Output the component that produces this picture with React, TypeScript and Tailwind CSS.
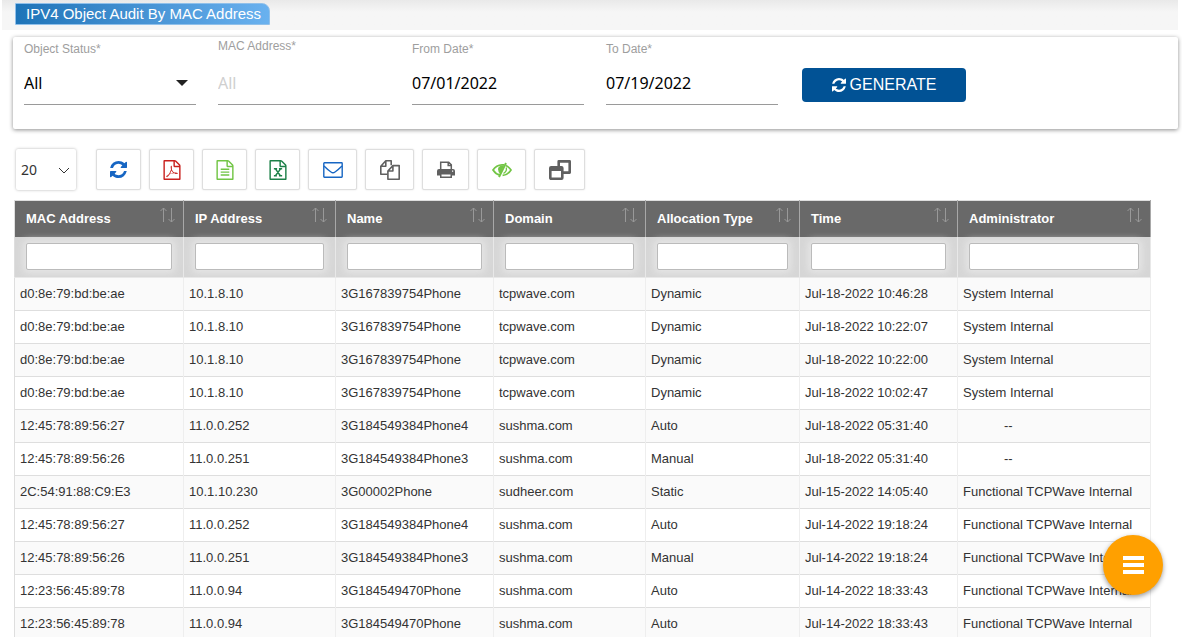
import React from "react";

const refreshPath =
  "M1511 1056q0 5-1 7-64 268-268 434.5t-478 166.5q-146 0-282.5-55t-243.5-157l-129 129q-19 19-45 19t-45-19-19-45v-448q0-26 19-45t45-19h448q26 0 45 19t19 45-19 45l-137 137q71 66 161 102t187 36q134 0 250-65t186-179q11-17 53-117 8-23 30-23h192q13 0 22.5 9.5t9.5 22.5zm25-800v448q0 26-19 45t-45 19h-448q-26 0-45-19t-19-45 19-45l138-138q-148-137-349-137-134 0-250 65t-186 179q-11 17-53 117-8 23-30 23h-199q-13 0-22.5-9.5t-9.5-22.5v-7q65-268 270-434.5t480-166.5q146 0 284 55.5t245 156.5l130-129q19-19 45-19t45 19 19 45z";
const filePath =
  "M1468 380q28 28 48 76t20 88v1152q0 40-28 68t-68 28h-1344q-40 0-68-28t-28-68v-1600q0-40 28-68t68-28h896q40 0 88 20t76 48zm-444-244v376h376q-10-29-22-41l-313-313q-12-12-41-22zm384 1528v-1024h-416q-40 0-68-28t-28-68v-416h-768v1536h1280z";
const pdfPath =
  "m-514-593q33 26 84 56 59-7 117-7 147 0 177 49 16 22 2 52 0 1-1 2l-2 2v1q-6 38-71 38-48 0-115-20t-130-53q-221 24-392 83-153 262-242 262-15 0-28-7l-24-12q-1-1-6-5-10-10-6-36 9-40 56-91.5t132-96.5q14-9 23 6 2 2 2 4 52-85 107-197 68-136 104-262-24-82-30.5-159.5t6.5-127.5q11-40 42-40h22q23 0 35 15 18 21 9 68-2 6-4 8 1 3 1 8v30q-2 123-14 192 55 164 146 238zm-576 411q52-24 137-158-51 40-87.5 84t-49.5 74zm398-920q-15 42-2 132 1-7 7-44 0-3 7-43 1-4 4-8-1-1-1-2t-1-2q-1-22-13-36 0 1-1 2v2zm-124 661q135-54 284-81-2-1-13-9.5t-16-13.5q-76-67-127-176-27 86-83 197-30 56-45 83zm646-16q-24-24-140-24 76 28 124 28 14 0 18-1 0-1-2-3z";

const Refresh = ({ className }: { className: string }) => (
  <svg viewBox="0 128 1536 1536" className={className} fill="currentColor" aria-hidden="true">
    <path d={refreshPath} />
  </svg>
);

const FileIcon = ({ extra, children }: { extra?: string; children?: React.ReactNode }) => (
  <svg viewBox="0 0 1536 1792" className="h-5 w-[18px]" fill="currentColor" aria-hidden="true">
    <path d={filePath + (extra ?? "")} />
    {children}
  </svg>
);

const Lines = () => <path d="M384 768h768v128h-768zM384 1024h768v128h-768zM384 1280h768v128h-768z" />;

const Sheet = () => (
  <path
    d="M400 790h290M850 790h290M400 1420h270M850 1420h290M540 800l440 610M1000 800l-460 610"
    fill="none"
    stroke="currentColor"
    strokeWidth="130"
  />
);

const Mail = () => (
  <svg viewBox="0 0 20 16" className="h-4 w-5" fill="none" stroke="currentColor" strokeWidth="1.4" aria-hidden="true">
    <rect x="0.8" y="0.8" width="18.4" height="14.4" rx="0.600" />
    <path d="M1 4q4 4 7 6 2 1.400 4 0 3-2 7-6" />
  </svg>
);

const Copies = () => (
  <svg viewBox="0 0 20 20" className="size-5" fill="none" stroke="currentColor" strokeWidth="1.600" strokeLinejoin="round" aria-hidden="true">
    <path d="M7.500 14.200H.8V6.200L5.800.8h5.400v4.500M.8 6.200h5V.8" />
    <path d="M7.900 11l5-5.400h6.300v13.600H7.900zM7.900 11h5V5.600" />
  </svg>
);

const Printer = () => (
  <svg viewBox="0 0 18 18" className="size-[18px]" aria-hidden="true">
    <path d="M3.700 8V1.200h8l2.600 2.600V8M11.200 1.200V4.500h3" fill="none" stroke="currentColor" strokeWidth="1.500" />
    <path fillRule="evenodd" d="M2 8h14q2 0 2 2v4.500h-3V17H3v-2.500H0V10q0-2 2-2zm2.500 5.500v2h9v-2zM15 9.500v1.200h1.200V9.500z" fill="currentColor" />
  </svg>
);

const HiddenEye = () => (
  <svg viewBox="0 0 20 16" className="h-4 w-5" fill="none" stroke="currentColor" strokeWidth="1.700" aria-hidden="true">
    <path d="M8 13.200Q3.800 12.200 1 8 4.200 3 10 2.800h2M14 3.500q3 1.500 5 4.500-3.200 5-8.400 5.400" />
    <path d="M14 1L7 15" strokeWidth="1.900" />
    <path d="M12 3.500Q6.500 3 6 7q0 3 2.300 5z" fill="currentColor" stroke="none" />
    <path d="M14.200 5.500q1.200 3.500-2.700 6" strokeWidth="1.300" />
  </svg>
);

const Windows = () => (
  <svg viewBox="0 0 22 20" className="h-5 w-[22px]" fill="none" stroke="currentColor" strokeWidth="2.600" aria-hidden="true">
    <path d="M9.700 7V1.400h11v11.200H14" strokeLinejoin="round" />
    <rect x="1.300" y="7.300" width="12" height="11.400" rx="0.800" />
    <path d="M1.200 9h12" strokeWidth="4" />
  </svg>
);

const tools = [
  { label: "Refresh", cls: "w-[45px] text-[#1766c3]", icon: <Refresh className="size-[17px]" /> },
  { label: "Export to PDF", cls: "w-[45px] text-[#c9211e]", icon: <FileIcon extra={pdfPath} /> },
  { label: "Export to CSV", cls: "w-[45px] text-[#72c545]", icon: <FileIcon><Lines /></FileIcon> },
  { label: "Export to Excel", cls: "w-[45px] text-[#1c8048]", icon: <FileIcon><Sheet /></FileIcon> },
  { label: "Email", cls: "w-[49px] text-[#1766c3]", icon: <Mail /> },
  { label: "Copy", cls: "w-[49px] text-[#606060]", icon: <Copies /> },
  { label: "Print", cls: "w-[47px] text-[#606060]", icon: <Printer /> },
  { label: "Show or hide columns", cls: "w-[49px] text-[#72c545]", icon: <HiddenEye /> },
  { label: "Open in window", cls: "w-[51px] text-[#606060]", icon: <Windows /> },
];

const columns = [
  { name: "MAC Address", width: "w-[169px]" },
  { name: "IP Address", width: "w-[152px]" },
  { name: "Name", width: "w-[158px]" },
  { name: "Domain", width: "w-[152px]" },
  { name: "Allocation Type", width: "w-[154px]" },
  { name: "Time", width: "w-[158px]" },
  { name: "Administrator", width: "w-[193px]" },
];

const rows = [
  ["d0:8e:79:bd:be:ae", "10.1.8.10", "3G167839754Phone", "tcpwave.com", "Dynamic", "Jul-18-2022 10:46:28", "System Internal"],
  ["d0:8e:79:bd:be:ae", "10.1.8.10", "3G167839754Phone", "tcpwave.com", "Dynamic", "Jul-18-2022 10:22:07", "System Internal"],
  ["d0:8e:79:bd:be:ae", "10.1.8.10", "3G167839754Phone", "tcpwave.com", "Dynamic", "Jul-18-2022 10:22:00", "System Internal"],
  ["d0:8e:79:bd:be:ae", "10.1.8.10", "3G167839754Phone", "tcpwave.com", "Dynamic", "Jul-18-2022 10:02:47", "System Internal"],
  ["12:45:78:89:56:27", "11.0.0.252", "3G184549384Phone4", "sushma.com", "Auto", "Jul-18-2022 05:31:40", "--"],
  ["12:45:78:89:56:26", "11.0.0.251", "3G184549384Phone3", "sushma.com", "Manual", "Jul-18-2022 05:31:40", "--"],
  ["2C:54:91:88:C9:E3", "10.1.10.230", "3G00002Phone", "sudheer.com", "Static", "Jul-15-2022 14:05:40", "Functional TCPWave Internal"],
  ["12:45:78:89:56:27", "11.0.0.252", "3G184549384Phone4", "sushma.com", "Auto", "Jul-14-2022 19:18:24", "Functional TCPWave Internal"],
  ["12:45:78:89:56:26", "11.0.0.251", "3G184549384Phone3", "sushma.com", "Manual", "Jul-14-2022 19:18:24", "Functional TCPWave Internal"],
  ["12:23:56:45:89:78", "11.0.0.94", "3G184549470Phone", "sushma.com", "Auto", "Jul-14-2022 18:33:43", "Functional TCPWave Internal"],
  ["12:23:56:45:89:78", "11.0.0.94", "3G184549470Phone", "sushma.com", "Auto", "Jul-14-2022 18:33:43", "Functional TCPWave Internal"],
];

const fieldClass =
  "block h-11 w-full appearance-none rounded-none border-b border-[#9a9a9a] bg-transparent font-['Noto_Sans',sans-serif] text-base text-black outline-none placeholder:text-[#cfcfcf]";
const labelClass = "block text-xs leading-4 text-[#9e9e9e]";

export default function App() {
  return (
    <div className="h-screen overflow-hidden bg-white font-['Liberation_Sans',Arial,sans-serif] text-[#333]">
      <header className="mr-1 ml-0.5 flex h-[30px] items-start bg-linear-to-b from-[#e9e9e9] to-[#f6f6f6] to-40% pt-[3px] pl-[13px]">
        <h1 className="h-[22px] rounded-tr-lg border border-[#90c0ea] bg-linear-to-r from-[#1d74b8] to-[#69b1ef] pr-2 pl-2.5 text-[15px] leading-5 text-white">
          IPV4 Object Audit By MAC Address
        </h1>
      </header>

      <form className="mt-[7px] mr-1 ml-[13px] flex h-[92px] gap-[22px] rounded-xs bg-white pl-[11px] shadow-[0_1px_4px_rgba(0,0,0,0.45)]" onSubmit={(e) => e.preventDefault()}>
        <div className="w-[172px] pt-1">
          <label htmlFor="status" className={labelClass}>Object Status*</label>
          <div className="relative mt-1">
            <select id="status" className={fieldClass} defaultValue="All">
              <option>All</option>
            </select>
            <svg viewBox="0 0 12 6" className="pointer-events-none absolute top-[19px] right-2 h-1.5 w-3" aria-hidden="true">
              <path d="M0 0h12L6 6z" fill="#222" />
            </svg>
          </div>
        </div>
        <div className="w-[172px] pt-px">
          <label htmlFor="mac" className={labelClass}>MAC Address*</label>
          <div className="mt-[7px]"><input id="mac" className={fieldClass} placeholder="All" /></div>
        </div>
        <div className="w-[172px] pt-1">
          <label htmlFor="from" className={labelClass}>From Date*</label>
          <div className="mt-1"><input id="from" className={fieldClass} defaultValue="07/01/2022" /></div>
        </div>
        <div className="w-[172px] pt-1">
          <label htmlFor="to" className={labelClass}>To Date*</label>
          <div className="mt-1"><input id="to" className={fieldClass} defaultValue="07/19/2022" /></div>
        </div>
        <button className="mt-[31px] ml-0.5 flex h-[34px] w-[164px] items-center justify-center gap-1 rounded-sm bg-[#015295] text-base text-white">
          <Refresh className="size-[14px]" />
          GENERATE
        </button>
      </form>

      <div className="mt-5 ml-4 flex h-[41px]">
        <div className="relative mr-5 w-[60px]">
          <select aria-label="Rows per page" defaultValue="20" className="h-full w-full appearance-none rounded-xs bg-white pl-[5px] font-['Noto_Sans',sans-serif] text-sm shadow-[0_0_3px_rgba(0,0,0,0.3)]">
            <option>20</option>
          </select>
          <svg viewBox="0 0 12 7" className="pointer-events-none absolute top-[18px] right-1.5 h-[7px] w-3" fill="none" stroke="#333" aria-hidden="true">
            <path d="M1 1l5 5 5-5" />
          </svg>
        </div>
        <div className="flex gap-2">
          {tools.map((t) => (
            <button key={t.label} aria-label={t.label} className={`flex items-center justify-center rounded-xs border border-[#dedede] bg-white shadow-[0_0_2px_rgba(0,0,0,0.12)] ${t.cls}`}>
              {t.icon}
            </button>
          ))}
        </div>
      </div>

      <div className="mt-2.5 mr-[31px] ml-3.5">
        <table className="w-full table-fixed border-collapse border border-[#dedede] text-[13px]">
          <thead>
            <tr className="h-9 bg-[#696969] text-white">
              {columns.map((c) => (
                <th key={c.name} className={`border-r border-[#a8a8a8] p-0 text-left font-bold ${c.width}`}>
                  <div className="flex h-9 items-center justify-between pr-2 pl-[11px]">
                    {c.name}
                    <svg viewBox="0 0 16 16" className="mb-2 size-4" fill="none" stroke="#999" aria-hidden="true">
                      <path d="M4.500 15V1M1.500 4l3-3 3 3M12.500 1v14M9.500 12l3 3 3-3" />
                    </svg>
                  </div>
                </th>
              ))}
            </tr>
            <tr className="h-10">
              {columns.map((c) => (
                <td key={c.name} className="border-r border-b border-[#e8e8e8] bg-[#d6d6d6] px-[11px] py-0">
                  <input aria-label={`Filter ${c.name}`} className="block h-[27px] w-full rounded-xs border border-[#bbb] bg-white px-1 shadow-[0_0_7px_3px_#e6e6e6]" />
                </td>
              ))}
            </tr>
          </thead>
          <tbody>
            {rows.map((r, i) => (
              <tr key={i} className="h-[33px] border-b border-[#dedede] odd:bg-[#fafafa]">
                {r.map((v, j) => (
                  <td key={j} className={`border-r border-[#eee] py-0 whitespace-nowrap ${v === "--" ? "pl-[46px]" : "pl-[5px]"}`}>{v}</td>
                ))}
              </tr>
            ))}
          </tbody>
        </table>
      </div>

      <button aria-label="Menu" className="fixed right-[19px] bottom-[42px] flex size-[60px] items-center justify-center rounded-full bg-[#ffa000] shadow-[0_2px_5px_rgba(0,0,0,0.4)]">
        <svg viewBox="0 0 21 18" className="h-[18px] w-[21px]" fill="white" aria-hidden="true">
          <path d="M0 0h21v4H0zM0 7h21v4H0zM0 14h21v4H0z" />
        </svg>
      </button>
    </div>
  );
}
